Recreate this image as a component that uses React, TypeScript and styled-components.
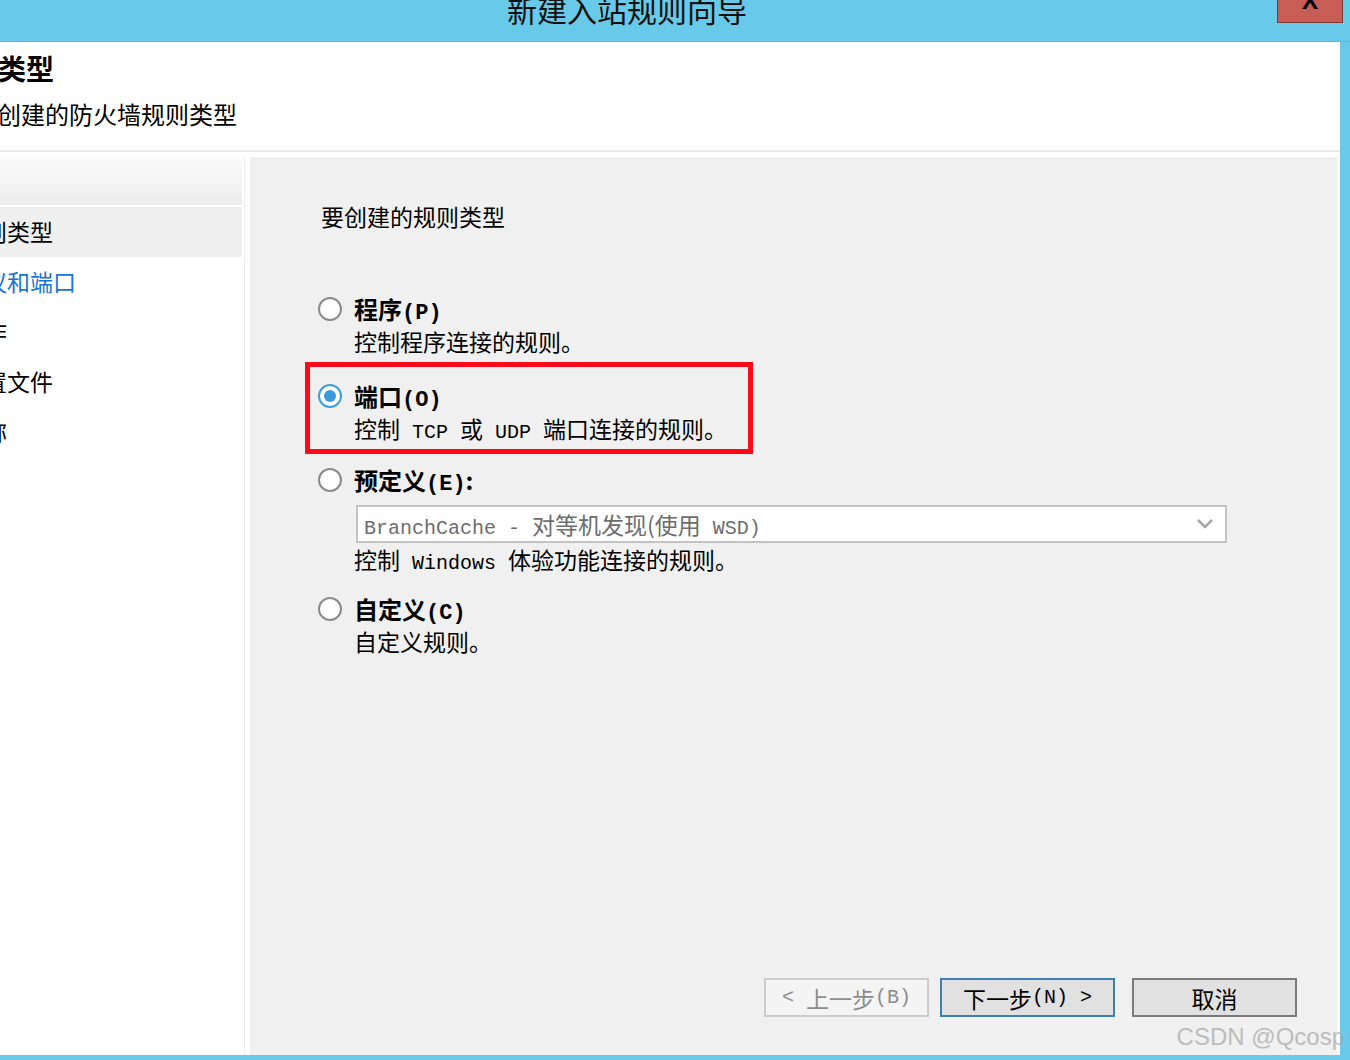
import React from "react";
import styled, { createGlobalStyle } from "styled-components";

const Global = createGlobalStyle`
  html, body { margin: 0; padding: 0; background: #69c9e8; }
  body { font-family: "Noto Sans CJK SC", "Noto Sans", sans-serif; }
  * { box-sizing: border-box; }
`;

const CJK = `"Noto Sans CJK SC", "Noto Sans", sans-serif`;

const Frame = styled.div`
  position: relative;
  width: 1350px;
  height: 1060px;
  overflow: hidden;
  background: #69c9e8;
  display: flex;
  flex-direction: column;
  font-family: ${CJK};
`;

const TitleBar = styled.div`
  height: 42px;
  flex: none;
  display: flex;
  align-items: flex-start;
  border-bottom: 1px solid #5eb6d4;
`;

const Title = styled.div`
  margin-left: 507px;
  margin-top: -7px;
  font-size: 30px;
  line-height: 32px;
  color: #111;
  white-space: nowrap;
`;

const CloseButton = styled.div`
  margin-left: auto;
  margin-right: 7px;
  width: 66px;
  height: 23px;
  background: #c75d55;
  border: 1px solid #7e3a33;
  border-top: none;
  display: flex;
  justify-content: center;
  overflow: hidden;
  font-family: "Liberation Sans", sans-serif;
  font-weight: 700;
  font-size: 24px;
  line-height: 24px;
  color: #000;
  & > span { margin-top: -11px; }
`;

const Window = styled.div`
  flex: 1;
  margin-right: 10px;
  margin-bottom: 5px;
  background: #fff;
  display: flex;
  flex-direction: column;
  min-height: 0;
`;

const Header = styled.div`
  height: 110px;
  flex: none;
  background: #fff;
  border-bottom: 2px solid #e9e9e9;
  overflow: hidden;
  display: flex;
  flex-direction: column;
`;

const HeaderTitle = styled.div`
  margin-top: 10px;
  margin-left: -58px;
  font-size: 28px;
  line-height: 32px;
  font-weight: 700;
  color: #000;
  white-space: nowrap;
`;

const HeaderSub = styled.div`
  margin-top: 14px;
  margin-left: -75px;
  font-size: 24px;
  line-height: 32px;
  color: #000;
  white-space: nowrap;
`;

const Body = styled.div`
  flex: 1;
  margin-top: 5px;
  display: flex;
  min-height: 0;
`;

const Sidebar = styled.div`
  width: 245px;
  flex: none;
  background: #fff;
  border-right: 1px solid #ececec;
  margin-right: 5px;
  overflow: hidden;
  display: flex;
  flex-direction: column;
`;

const SidebarTop = styled.div`
  height: 48px;
  margin-right: 2px;
  background: linear-gradient(#fbfbfb, #ececec);
  margin-bottom: 2px;
`;

const StepItem = styled.div<{ $active?: boolean; $link?: boolean }>`
  height: 50px;
  width: 242px;
  display: flex;
  align-items: center;
  padding-bottom: 2px;
  background: ${(p) => (p.$active ? "#efefef" : "transparent")};
  color: ${(p) => (p.$link ? "#1a73d1" : "#000")};
  font-size: 23px;
  white-space: nowrap;
  & > span { margin-left: -39px; }
`;

const Panel = styled.div`
  flex: 1;
  margin-right: 3px;
  background: #f0f0f0;
  display: flex;
  flex-direction: column;
  padding: 0 40px 38px 68px;
  color: #000;
`;

const Heading = styled.div`
  margin-top: 44px;
  margin-left: 3px;
  font-size: 23px;
  line-height: 30px;
`;

const Option = styled.div<{ $gap: number }>`
  margin-top: ${(p) => p.$gap}px;
  display: grid;
  grid-template-columns: 24px 1fr;
  grid-auto-rows: auto;
  column-gap: 12px;
  align-items: center;
`;

const Highlight = styled.div`
  margin-top: 5px;
  margin-left: -13px;
  width: 448px;
  border: 5px solid #ff0a1a;
  padding: 13px 0 5px 8px;
`;

const Radio = styled.span<{ $checked?: boolean }>`
  width: 24px;
  height: 24px;
  border-radius: 50%;
  background: #fff;
  border: 2px solid ${(p) => (p.$checked ? "#3d9de0" : "#8a8a8a")};
  display: flex;
  align-items: center;
  justify-content: center;
  &::after {
    content: "";
    width: 12px;
    height: 12px;
    border-radius: 50%;
    background: ${(p) => (p.$checked ? "#3a9bdc" : "transparent")};
  }
`;

const Label = styled.div`
  height: 32px;
  font-size: 24px;
  line-height: 32px;
  font-weight: 700;
  white-space: nowrap;
`;

const Desc = styled.div`
  grid-column: 2;
  height: 32px;
  font-size: 23px;
  line-height: 32px;
  white-space: nowrap;
`;

const Mono = styled.span<{ $bold?: boolean; $size?: number }>`
  font-family: "Liberation Mono", monospace;
  font-size: ${(p) => p.$size ?? 20}px;
  line-height: 1;
  font-weight: ${(p) => (p.$bold ? 700 : 400)};
  white-space: pre;
`;

const Combo = styled.div`
  grid-column: 2;
  margin-top: 9px;
  margin-left: 2px;
  width: 871px;
  height: 38px;
  background: #fff;
  border: 2px solid #c3c3c3;
  display: flex;
  align-items: center;
  padding: 0 12px 0 6px;
  color: #6d6d6d;
  font-size: 23px;
  line-height: 32px;
  white-space: nowrap;
`;

const ComboText = styled.span`
  flex: 1;
`;

const Footer = styled.div`
  margin-top: auto;
  display: flex;
  justify-content: flex-end;
  align-items: center;
`;

const Button = styled.div<{ $variant: "disabled" | "default" | "normal"; $w: number; $ml: number }>`
  width: ${(p) => p.$w}px;
  margin-left: ${(p) => p.$ml}px;
  height: 39px;
  display: flex;
  align-items: center;
  justify-content: center;
  font-size: 23px;
  line-height: 32px;
  white-space: nowrap;
  background: ${(p) => (p.$variant === "disabled" ? "#f4f4f4" : "#e1e1e1")};
  color: ${(p) => (p.$variant === "disabled" ? "#8c8c8c" : "#000")};
  border: 2px solid
    ${(p) => (p.$variant === "disabled" ? "#cbcbcb" : p.$variant === "default" ? "#3c7fb1" : "#7a7a7a")};
`;

const Watermark = styled.div`
  position: absolute;
  right: 5px;
  bottom: 9px;
  font-family: "Liberation Sans", Arial, sans-serif;
  font-size: 24px;
  line-height: 28px;
  color: rgba(170, 170, 170, 0.75);
  white-space: nowrap;
`;

export default function App() {
  return (
    <>
      <Global />
      <Frame>
        <TitleBar>
          <Title>新建入站规则向导</Title>
          <CloseButton>
            <span>X</span>
          </CloseButton>
        </TitleBar>
        <Window>
          <Header>
            <HeaderTitle>规则类型</HeaderTitle>
            <HeaderSub>选择要创建的防火墙规则类型</HeaderSub>
          </Header>
          <Body>
            <Sidebar>
              <SidebarTop />
              <StepItem $active>
                <span>规则类型</span>
              </StepItem>
              <StepItem $link>
                <span>协议和端口</span>
              </StepItem>
              <StepItem>
                <span>操作</span>
              </StepItem>
              <StepItem>
                <span>配置文件</span>
              </StepItem>
              <StepItem>
                <span>名称</span>
              </StepItem>
            </Sidebar>
            <Panel>
              <Heading>要创建的规则类型</Heading>
              <Option $gap={62}>
                <Radio />
                <Label>
                  程序<Mono $bold $size={22}>(P)</Mono>
                </Label>
                <Desc>控制程序连接的规则。</Desc>
              </Option>
              <Highlight>
                <Option $gap={0}>
                  <Radio $checked />
                  <Label>
                    端口<Mono $bold $size={22}>(O)</Mono>
                  </Label>
                  <Desc>
                    控制<Mono> TCP </Mono>或<Mono> UDP </Mono>端口连接的规则。
                  </Desc>
                </Option>
              </Highlight>
              <Option $gap={10}>
                <Radio />
                <Label>
                  预定义<Mono $bold $size={22}>(E)</Mono>:
                </Label>
                <Combo>
                  <ComboText>
                    <Mono>BranchCache - </Mono>对等机发现(使用<Mono> WSD)</Mono>
                  </ComboText>
                  <svg width="16" height="10" viewBox="0 0 16 10">
                    <polyline points="1,1 8,8 15,1" fill="none" stroke="#a6a6a6" strokeWidth="2.5" />
                  </svg>
                </Combo>
                <Desc>
                  控制<Mono> Windows </Mono>体验功能连接的规则。
                </Desc>
              </Option>
              <Option $gap={18}>
                <Radio />
                <Label>
                  自定义<Mono $bold $size={22}>(C)</Mono>
                </Label>
                <Desc>自定义规则。</Desc>
              </Option>
              <Footer>
                <Button $variant="disabled" $w={165} $ml={0}>
                  <Mono>&lt; </Mono>上一步<Mono>(B)</Mono>
                </Button>
                <Button $variant="default" $w={175} $ml={11}>
                  下一步<Mono>(N) &gt;</Mono>
                </Button>
                <Button $variant="normal" $w={165} $ml={17}>
                  取消
                </Button>
              </Footer>
            </Panel>
          </Body>
        </Window>
        <Watermark>CSDN @Qcosp</Watermark>
      </Frame>
    </>
  );
}
